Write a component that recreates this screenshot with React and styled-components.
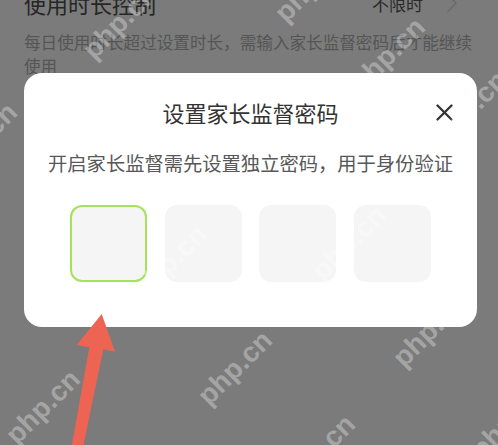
import React from "react";
import styled, { createGlobalStyle } from "styled-components";

const GlobalStyle = createGlobalStyle`
  html, body { margin: 0; padding: 0; background: #7b7b7b; }
  body { font-family: "Noto Sans CJK SC", "Noto Sans", sans-serif; }
  * { box-sizing: border-box; }
`;

const Page = styled.div`
  position: relative;
  width: 498px;
  height: 445px;
  overflow: hidden;
  background: #7b7b7b;
`;

const SettingRow = styled.div`
  display: flex;
  align-items: center;
  justify-content: space-between;
  height: 22px;
  margin-top: -8px;
  padding: 0 40px 0 24px;
`;

const RowTitle = styled.div`
  font-size: 22px;
  line-height: 22px;
  font-weight: 400;
  color: #262626;
`;

const RowValue = styled.div`
  display: flex;
  align-items: center;
  gap: 23px;
  font-size: 17px;
  line-height: 17px;
  color: #2a2a2a;
`;

const Description = styled.p`
  margin: 15.5px 0 0;
  padding: 0 24px;
  font-size: 16.6px;
  line-height: 24px;
  color: #555;
`;

const Overlay = styled.div`
  position: absolute;
  inset: 0;
  display: flex;
  flex-direction: column;
  align-items: flex-start;
  padding: 73px 0 0 24px;
`;

const Dialog = styled.div`
  width: 453px;
  background: #fff;
  border-radius: 18px;
  padding: 24px 0 45px;
  display: flex;
  flex-direction: column;
  align-items: center;
`;

const Header = styled.div`
  width: 100%;
  display: grid;
  grid-template-columns: 1fr auto 1fr;
  align-items: center;
  padding: 0 24px;
`;

const Title = styled.h2`
  grid-column: 2;
  margin: 0;
  font-size: 22px;
  line-height: 30px;
  font-weight: 400;
  color: #333;
`;

const CloseButton = styled.button`
  grid-column: 3;
  justify-self: end;
  width: 17px;
  height: 17px;
  padding: 0;
  border: 0;
  background: none;
  display: flex;
`;

const Subtitle = styled.p`
  margin: 21.5px 0 0;
  font-size: 19.3px;
  line-height: 28px;
  color: #585858;
  white-space: nowrap;
`;

const CodeRow = styled.div`
  margin-top: 28.5px;
  display: flex;
  gap: 17.5px;
`;

const CodeBox = styled.div`
  width: 77px;
  height: 77px;
  border-radius: 12px;
  background: #f5f5f5;
  border: 2px solid ${(p) => (p.$active ? "#a5e25a" : "transparent")};
`;

const ArrowLayer = styled.svg`
  position: absolute;
  inset: 0;
  width: 498px;
  height: 445px;
  pointer-events: none;
`;

const WatermarkLayer = styled.div`
  position: absolute;
  inset: 0;
  overflow: hidden;
  pointer-events: none;
`;

const Watermark = styled.span`
  position: absolute;
  left: ${(p) => p.$x}px;
  top: ${(p) => p.$y}px;
  transform: translate(-50%, -50%) rotate(-45deg);
  font-family: "Liberation Sans", Arial, sans-serif;
  font-weight: 700;
  font-size: 28px;
  line-height: 1;
  color: rgba(255, 255, 255, 0.33);
  white-space: nowrap;
`;

const marks = [
  [120, 22],
  [312, -15],
  [388, 55],
  [-20, 140],
  [470, 108],
  [43, 407],
  [235, 368],
  [430, 330],
  [318, 452],
  [508, 422],
  [349, 243],
  [170, 262],
];

export default function App() {
  return (
    <>
      <GlobalStyle />
      <Page>
        <SettingRow>
          <RowTitle>使用时长控制</RowTitle>
          <RowValue>
            <span>不限时</span>
            <svg width="12" height="20" viewBox="0 0 12 20">
              <path d="M2 1.5 L10 10 L2 18.5" fill="none" stroke="#6b6b6b" strokeWidth="1.6" strokeLinecap="round" strokeLinejoin="round" />
            </svg>
          </RowValue>
        </SettingRow>
        <Description>每日使用时长超过设置时长，需输入家长监督密码后才能继续使用</Description>

        <Overlay>
          <Dialog>
            <Header>
              <Title>设置家长监督密码</Title>
              <CloseButton aria-label="关闭">
                <svg width="17" height="17" viewBox="0 0 17 17">
                  <path d="M1.5 1.5 L15.5 15.5 M15.5 1.5 L1.5 15.5" stroke="#333" strokeWidth="2.3" strokeLinecap="round" />
                </svg>
              </CloseButton>
            </Header>
            <Subtitle>开启家长监督需先设置独立密码，用于身份验证</Subtitle>
            <CodeRow>
              <CodeBox $active />
              <CodeBox />
              <CodeBox />
              <CodeBox />
            </CodeRow>
          </Dialog>
        </Overlay>

        <WatermarkLayer>
          {marks.map(([x, y], i) => (
            <Watermark key={i} $x={x} $y={y}>php.cn</Watermark>
          ))}
        </WatermarkLayer>

        <ArrowLayer viewBox="0 0 498 445">
          <polygon
            points="101.7,314 115,351.7 103.3,349.3 83.3,446 71.7,446 89.3,347.3 76.7,345"
            fill="#ee6452"
          />
        </ArrowLayer>
      </Page>
    </>
  );
}
